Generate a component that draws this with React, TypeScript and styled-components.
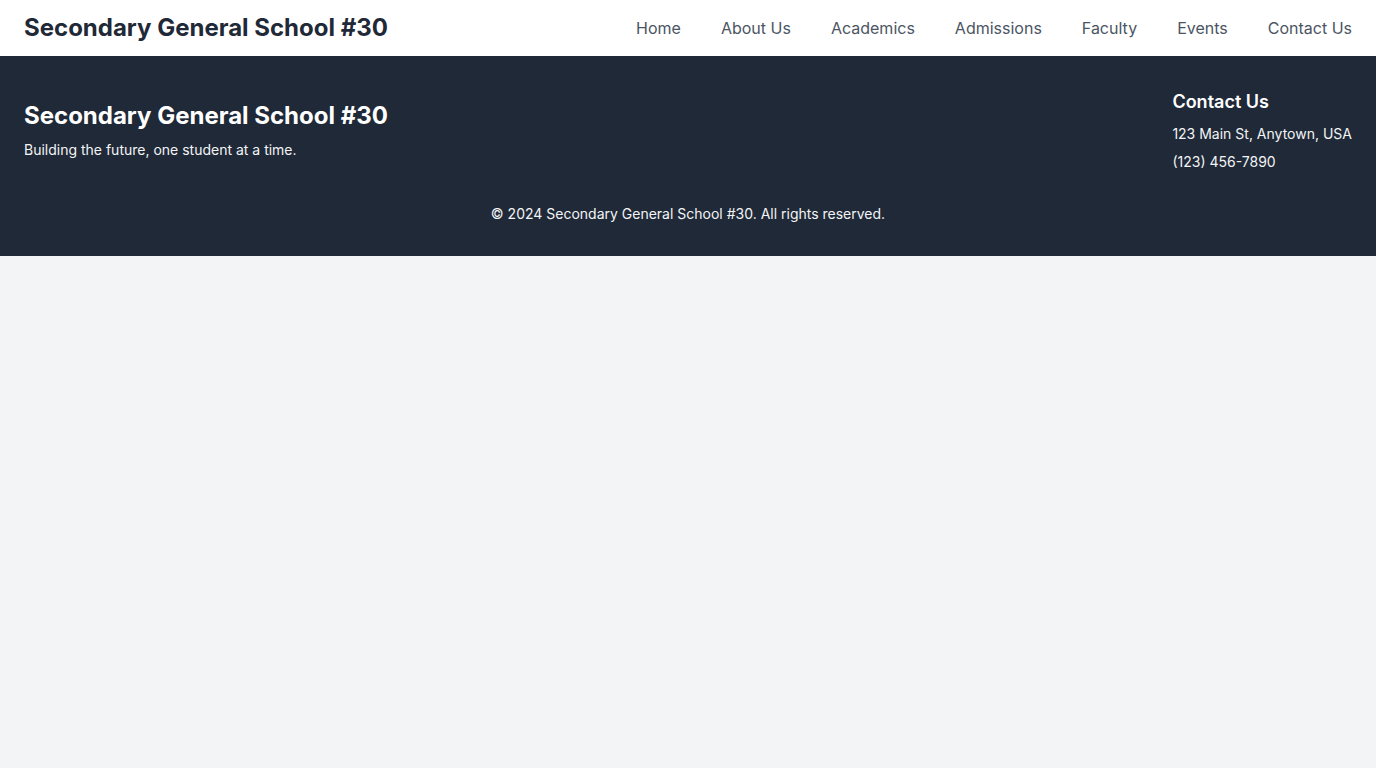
import React from "react";
import styled, { createGlobalStyle } from "styled-components";

const Global = createGlobalStyle`
  * { box-sizing: border-box; }
  html, body { margin: 0; padding: 0; }
  body {
    background: #f3f4f6;
    font-family: Inter, "Noto Sans", sans-serif;
    color: #1f2937;
  }
`;

const Header = styled.header`
  height: 56px;
  background: #ffffff;
  display: flex;
  align-items: center;
  justify-content: space-between;
  padding: 0 24px;
`;

const Brand = styled.h1`
  margin: 0;
  font-size: 24px;
  line-height: 32px;
  font-weight: 700;
  color: #1f2937;
`;

const Nav = styled.nav`
  display: flex;
  gap: 40px;
`;

const NavLink = styled.a`
  font-size: 16px;
  line-height: 24px;
  color: #4b5563;
  text-decoration: none;
`;

const Footer = styled.footer`
  background: #1f2937;
  color: #ffffff;
  padding: 32px 24px;
`;

const FooterTop = styled.div`
  display: flex;
  align-items: center;
  justify-content: space-between;
`;

const Column = styled.div`
  display: flex;
  flex-direction: column;
`;

const FooterTitle = styled.h2`
  margin: 0 0 8px;
  font-size: 24px;
  line-height: 32px;
  font-weight: 700;
`;

const Heading = styled.h3`
  margin: 0 0 8px;
  font-size: 18px;
  line-height: 28px;
  font-weight: 600;
`;

const Small = styled.p<{ $gap?: boolean }>`
  margin: ${(p) => (p.$gap ? "8px 0 0" : "0")};
  font-size: 14px;
  line-height: 20px;
  color: #f3f4f6;
`;

const Copyright = styled.p`
  margin: 32px 0 0;
  text-align: center;
  font-size: 14px;
  line-height: 20px;
  color: #f3f4f6;
`;

const links = ["Home", "About Us", "Academics", "Admissions", "Faculty", "Events", "Contact Us"];

export default function App() {
  return (
    <>
      <Global />
      <Header>
        <Brand>Secondary General School #30</Brand>
        <Nav>
          {links.map((l) => (
            <NavLink key={l} href="#">
              {l}
            </NavLink>
          ))}
        </Nav>
      </Header>
      <Footer>
        <FooterTop>
          <Column>
            <FooterTitle>Secondary General School #30</FooterTitle>
            <Small>Building the future, one student at a time.</Small>
          </Column>
          <Column>
            <Heading>Contact Us</Heading>
            <Small>123 Main St, Anytown, USA</Small>
            <Small $gap>(123) 456-7890</Small>
          </Column>
        </FooterTop>
        <Copyright>© 2024 Secondary General School #30. All rights reserved.</Copyright>
      </Footer>
    </>
  );
}
